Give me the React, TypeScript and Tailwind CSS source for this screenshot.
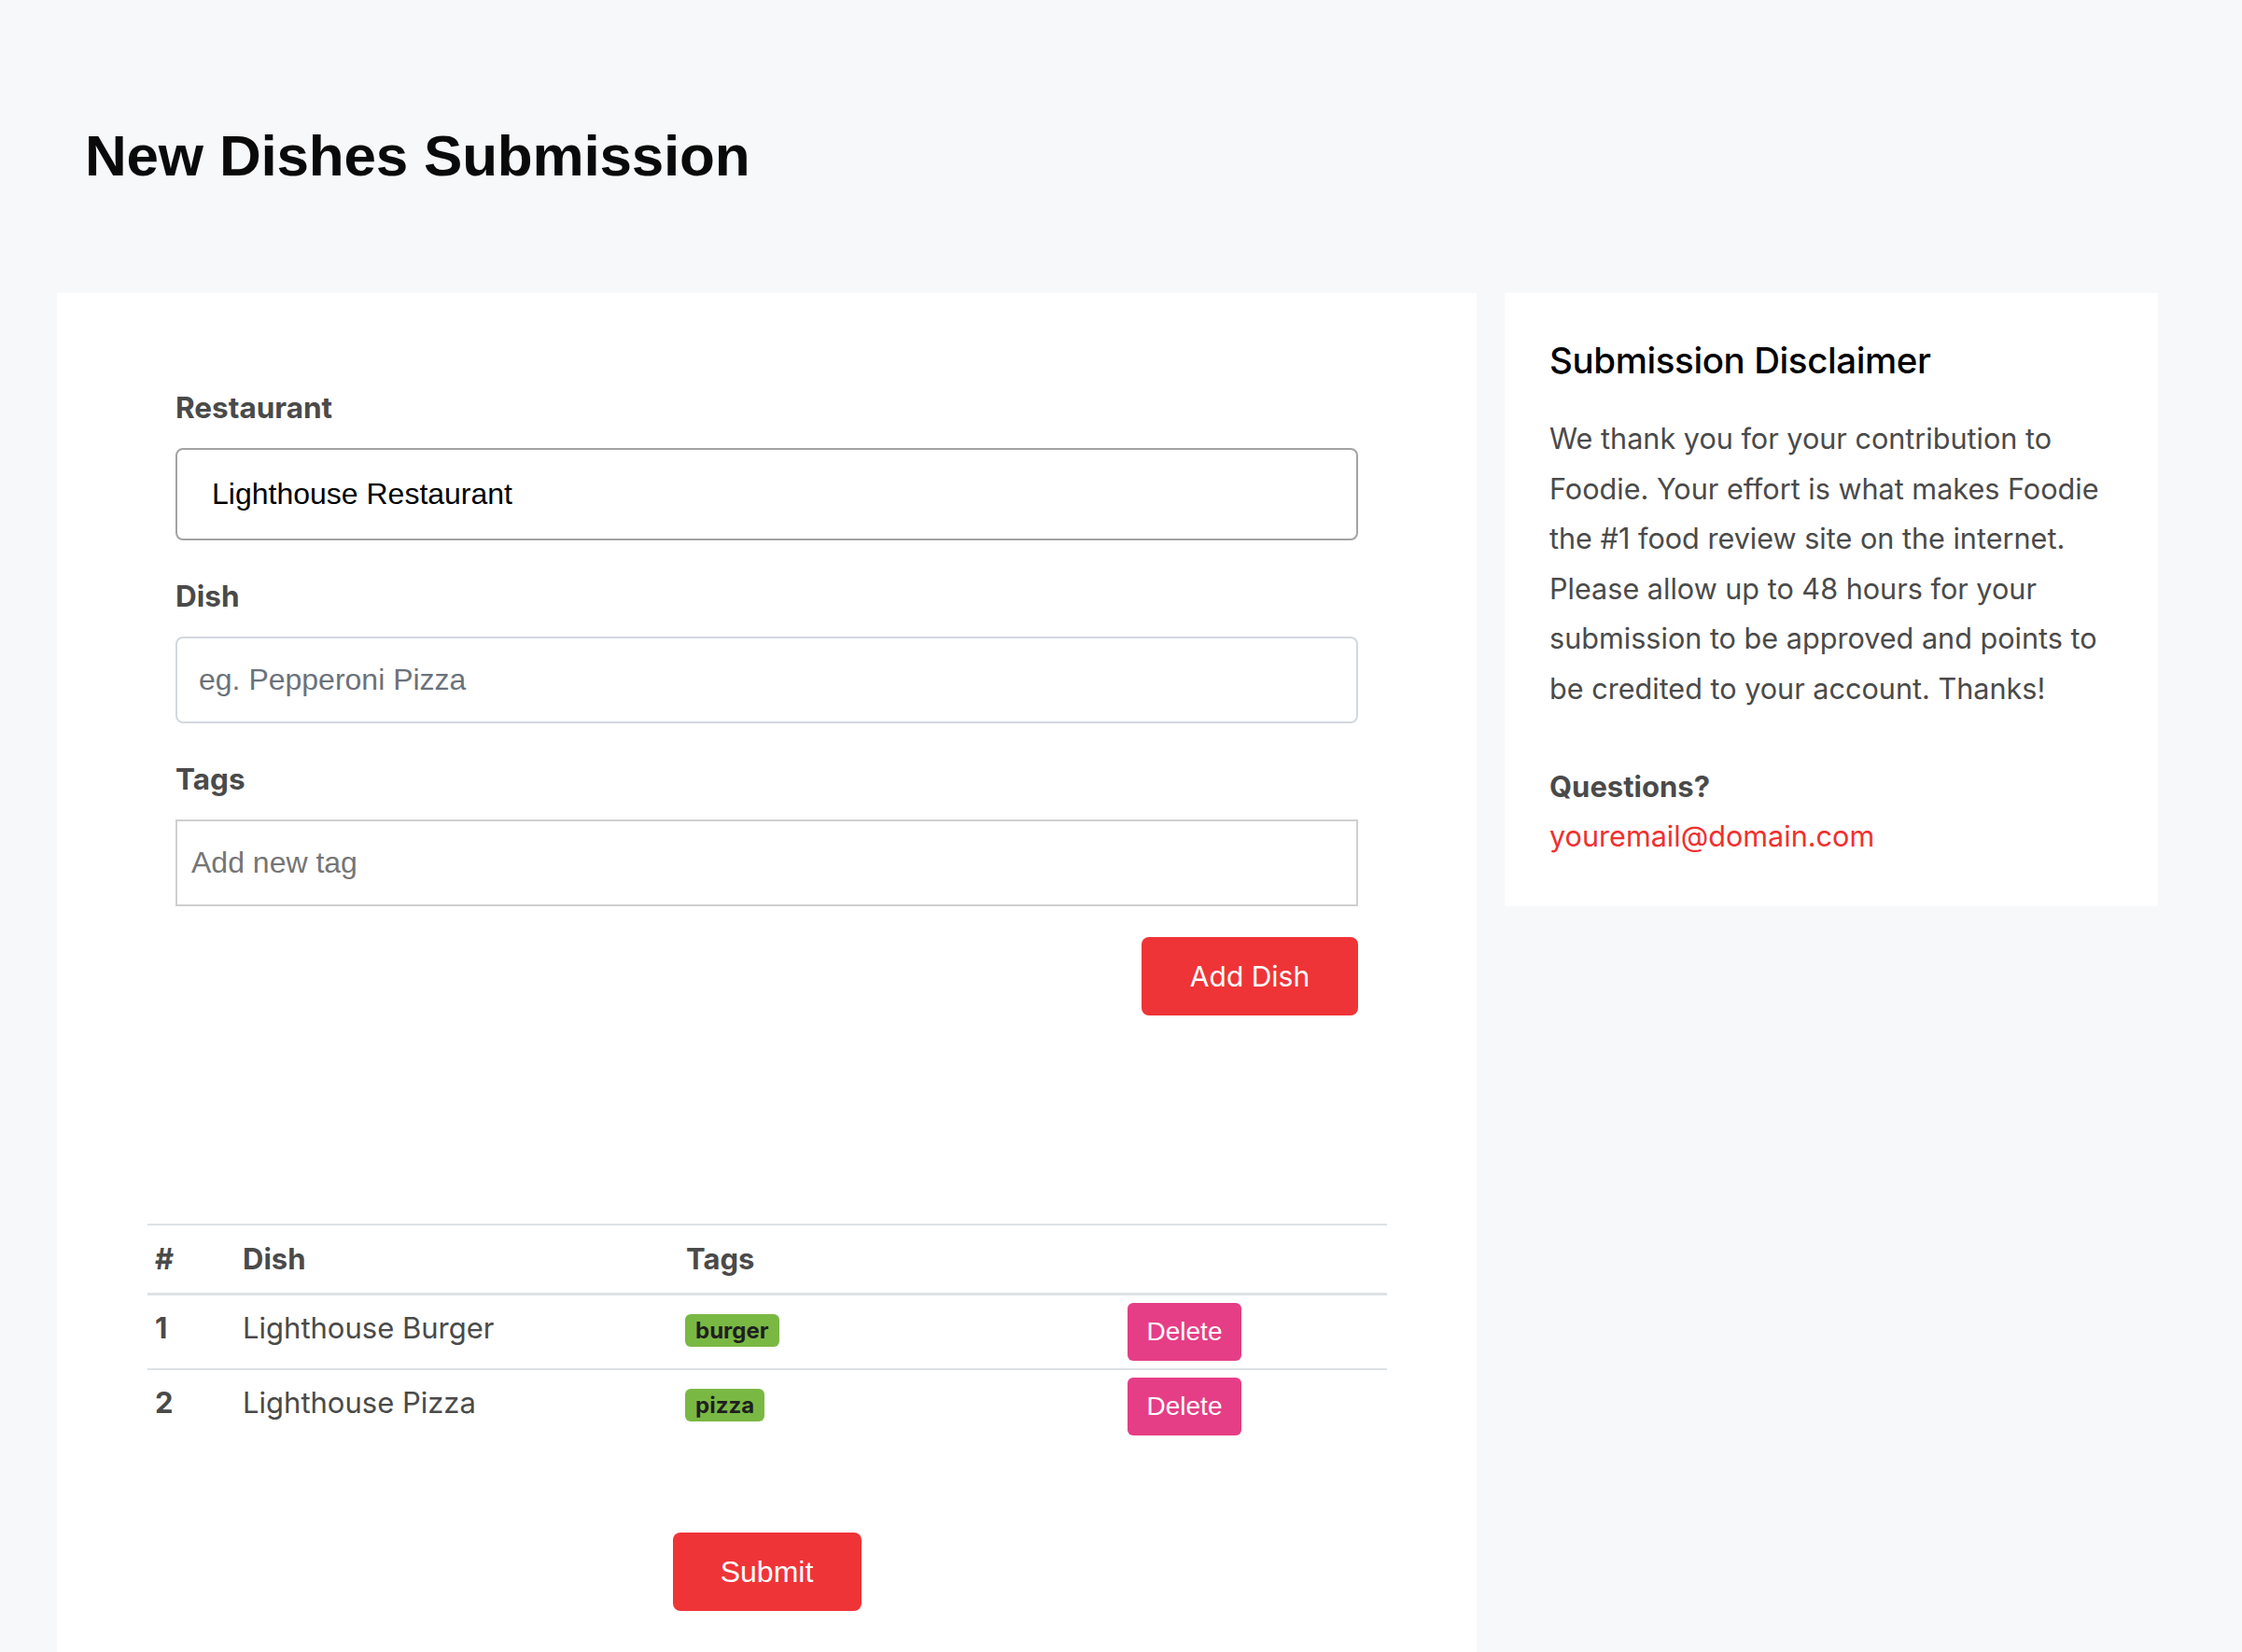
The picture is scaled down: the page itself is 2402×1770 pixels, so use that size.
const dishes = [
  { id: 1, name: "Lighthouse Burger", tag: "burger" },
  { id: 2, name: "Lighthouse Pizza", tag: "pizza" },
];

const helv = "font-['Liberation_Sans',Arial,sans-serif]";

export default function App() {
  return (
    <div className="min-h-screen bg-[#f7f8fa] font-['Inter',sans-serif]">
      <h1
        className={`pl-[91px] pt-[136px] text-[62px] leading-[62px] font-bold tracking-[-0.2px] text-[#0a0a0a] ${helv}`}
      >
        New Dishes Submission
      </h1>

      <div className="mt-[116px] flex items-start gap-[30px] pl-[61px]">
        {/* form card */}
        <div className="w-[1521px] bg-white px-[97px] pt-[105px] pb-[140px]">
          <div className="px-[30px]">
            <label className="block text-[31.5px] leading-[36px] font-bold text-[#4a4a4a]">
              Restaurant
            </label>
            <input
              defaultValue="Lighthouse Restaurant"
              className={`mt-[25px] block h-[99px] w-full rounded-[8px] border-2 border-[#a3a3a3] bg-white pl-[37px] text-[32px] text-black outline-none ${helv}`}
            />

            <label className="mt-[42px] block text-[31.5px] leading-[36px] font-bold text-[#4a4a4a]">
              Dish
            </label>
            <input
              placeholder="eg. Pepperoni Pizza"
              className={`mt-[25px] block h-[93px] w-full rounded-[8px] border-2 border-[#d3d8de] bg-white pl-[23px] text-[32px] text-black outline-none placeholder:text-[#6b727b] ${helv}`}
            />

            <label className="mt-[42px] block text-[31.5px] leading-[36px] font-bold text-[#4a4a4a]">
              Tags
            </label>
            <input
              placeholder="Add new tag"
              className={`mt-[25px] block h-[93px] w-full border-2 border-[#cfcfcf] bg-white pl-[15px] text-[32px] text-black outline-none placeholder:text-[#757575] ${helv}`}
            />

            <div className="mt-[33px] flex justify-end">
              <button className="h-[84px] w-[232px] rounded-[8px] bg-[#ef3437] text-[30px] text-white">
                Add Dish
              </button>
            </div>
          </div>

          <table className="mt-[223px] w-[1328px] border-collapse text-[#4a4a4a]">
            <thead>
              <tr className="border-t-2 border-b-[3px] border-[#dee2e6]">
                <th className="w-[95px] py-[18px] pl-[8px] text-left text-[31px] leading-[36px] font-bold">#</th>
                <th className="w-[474px] py-[18px] pl-[7px] text-left text-[31px] leading-[36px] font-bold">Dish</th>
                <th className="w-[473px] py-[18px] pl-[8px] text-left text-[31px] leading-[36px] font-bold">Tags</th>
                <th className="w-[286px]"></th>
              </tr>
            </thead>
            <tbody>
              {dishes.map((d, i) => (
                <tr key={d.id} className={i === 0 ? "border-b-2 border-[#dee2e6]" : ""}>
                  <th className="pt-[12px] pl-[8px] text-left align-top text-[31px] leading-[45px] font-bold">
                    {d.id}
                  </th>
                  <td className="pt-[12px] pl-[7px] align-top text-[31px] leading-[45px]">{d.name}</td>
                  <td className="pt-[20px] pl-[7px] align-top">
                    <span className="inline-flex h-[35px] items-center rounded-[6px] bg-[#7ab844] px-[11px] text-[24px] font-bold text-[#1f1f1f]">
                      {d.tag}
                    </span>
                  </td>
                  <td className="py-[8px] pl-[8px] align-top">
                    <button
                      className={`h-[62px] w-[122px] rounded-[6px] bg-[#e53e86] text-[28px] text-white ${helv}`}
                    >
                      Delete
                    </button>
                  </td>
                </tr>
              ))}
            </tbody>
          </table>

          <div className="mt-[96px] flex justify-center">
            <button className={`h-[84px] w-[202px] rounded-[8px] bg-[#ef3437] text-[32px] text-white ${helv}`}>
              Submit
            </button>
          </div>
        </div>

        {/* disclaimer */}
        <div className="w-[700px] bg-white px-[48px] pt-[48px] pb-[48px]">
          <h2 className="text-[38.5px] leading-[48px] font-medium tracking-[-0.4px] text-black">
            Submission Disclaimer
          </h2>
          <p className="mt-[33px] whitespace-nowrap text-[30.6px] leading-[53.6px] text-[#4a4a4a]">
            We thank you for your contribution to
            <br />
            Foodie. Your effort is what makes Foodie
            <br />
            the #1 food review site on the internet.
            <br />
            Please allow up to 48 hours for your
            <br />
            submission to be approved and points to
            <br />
            be credited to your account. Thanks!
          </p>
          <p className="mt-[51px] text-[31px] leading-[53.6px] font-bold text-[#4a4a4a]">Questions?</p>
          <a className="block text-[30.6px] leading-[53.6px] text-[#f0302f]">youremail@domain.com</a>
        </div>
      </div>
    </div>
  );
}
